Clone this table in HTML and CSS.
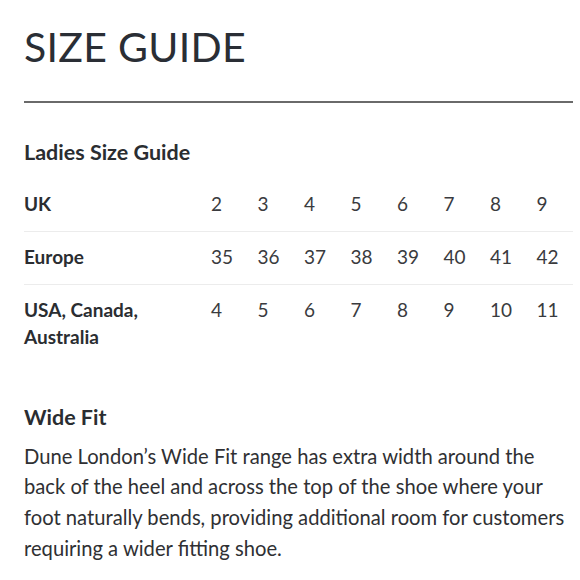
FILE: index.html
```html
<!DOCTYPE html>
<html lang="en">
<head>
<meta charset="utf-8">
<title>Size Guide</title>
<link rel="stylesheet" href="styles.css">
</head>
<body>
<main class="page">
  <h1 class="title">SIZE GUIDE</h1>
  <hr class="rule">
  <h2 class="subtitle">Ladies Size Guide</h2>
  <div class="sizes">
    <div class="row">
      <div class="label">UK</div>
      <div class="cell">2</div><div class="cell">3</div><div class="cell">4</div><div class="cell">5</div>
      <div class="cell">6</div><div class="cell">7</div><div class="cell">8</div><div class="cell">9</div>
    </div>
    <div class="row">
      <div class="label">Europe</div>
      <div class="cell">35</div><div class="cell">36</div><div class="cell">37</div><div class="cell">38</div>
      <div class="cell">39</div><div class="cell">40</div><div class="cell">41</div><div class="cell">42</div>
    </div>
    <div class="row row-last">
      <div class="label">USA, Canada,<br>Australia</div>
      <div class="cell">4</div><div class="cell">5</div><div class="cell">6</div><div class="cell">7</div>
      <div class="cell">8</div><div class="cell">9</div><div class="cell">10</div><div class="cell">11</div>
    </div>
  </div>
  <h2 class="subtitle wide">Wide Fit</h2>
  <p class="text">Dune London’s Wide Fit range has extra width around the back of the heel and across the top of the shoe where your foot naturally bends, providing additional room for customers requiring a wider fitting shoe.</p>
</main>
</body>
</html>
```
FILE: styles.css
```css
html, body {
  margin: 0;
  padding: 0;
  background: #ffffff;
}

.page {
  font-family: Lato, "Noto Sans", sans-serif;
  color: #2f3033;
  padding: 21px 7px 0 24px;
}

.title {
  margin: 0;
  font-size: 41px;
  line-height: 52px;
  font-weight: 400;
  color: #2a2e35;
  letter-spacing: 0.3px;
}

.rule {
  margin: 28px 0 0 0;
  border: 0;
  height: 1.5px;
  background: #6a6a6a;
}

.subtitle {
  margin: 37px 0 0 0;
  font-size: 21.5px;
  line-height: 24px;
  font-weight: 700;
  color: #2a2d31;
}

.sizes {
  margin-top: 15px;
}

.row {
  display: grid;
  grid-template-columns: 187px repeat(7, 46.5px) 1fr;
  padding: 11px 0 14px 0;
  border-bottom: 1px solid #ececec;
  font-size: 19px;
  line-height: 27px;
}

.row-last {
  border-bottom: 0;
}

.label {
  font-weight: 700;
  color: #2a2d31;
}

.cell {
  font-weight: 400;
  color: #3a3b3e;
}

.wide {
  margin-top: 41px;
}

.text {
  margin: 12px 0 0 0;
  font-size: 20.2px;
  line-height: 30.8px;
  color: #2f3033;
}
```
